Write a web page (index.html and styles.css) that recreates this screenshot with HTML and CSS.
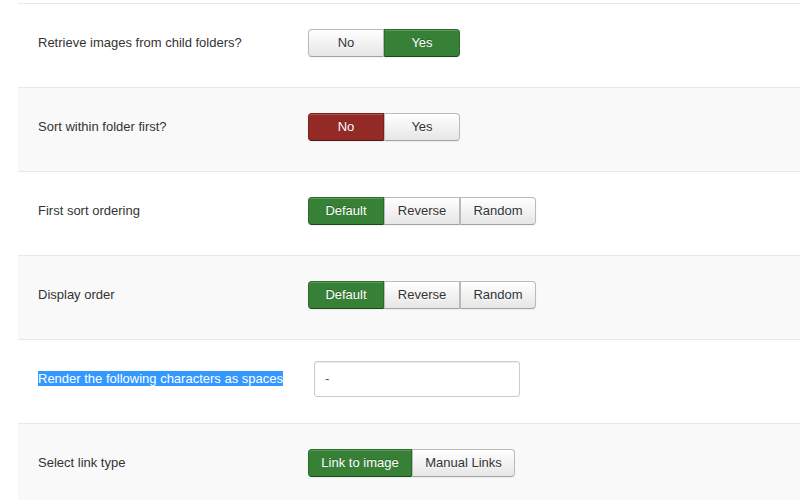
FILE: index.html
```html
<!DOCTYPE html>
<html>
<head>
<meta charset="utf-8">
<link rel="stylesheet" href="styles.css">
</head>
<body>
<div class="form">
  <div class="row">
    <div class="label">Retrieve images from child folders?</div>
    <div class="controls">
      <div class="btn-group">
        <span class="btn">No</span>
        <span class="btn btn-success">Yes</span>
      </div>
    </div>
  </div>
  <div class="row alt">
    <div class="label">Sort within folder first?</div>
    <div class="controls">
      <div class="btn-group">
        <span class="btn btn-danger">No</span>
        <span class="btn">Yes</span>
      </div>
    </div>
  </div>
  <div class="row">
    <div class="label">First sort ordering</div>
    <div class="controls">
      <div class="btn-group">
        <span class="btn btn-success">Default</span>
        <span class="btn">Reverse</span>
        <span class="btn">Random</span>
      </div>
    </div>
  </div>
  <div class="row alt">
    <div class="label">Display order</div>
    <div class="controls">
      <div class="btn-group">
        <span class="btn btn-success">Default</span>
        <span class="btn">Reverse</span>
        <span class="btn">Random</span>
      </div>
    </div>
  </div>
  <div class="row">
    <div class="label"><span class="selected">Render the following characters as spaces</span></div>
    <div class="controls input-controls">
      <div class="input">-</div>
    </div>
  </div>
  <div class="row alt">
    <div class="label">Select link type</div>
    <div class="controls">
      <div class="btn-group">
        <span class="btn btn-success wide">Link to image</span>
        <span class="btn wide">Manual Links</span>
      </div>
    </div>
  </div>
</div>
</body>
</html>
```
FILE: styles.css
```css
html, body {
  margin: 0;
  padding: 0;
  background: #fff;
}
body {
  font-family: "Liberation Sans", Arial, sans-serif;
  font-size: 13px;
  line-height: 18px;
  color: #333;
  padding-top: 3px;
}
.form {
  margin-left: 18px;
  border-top: 1px solid #e8e8e8;
}
.row {
  display: flex;
  align-items: center;
  height: 77px;
  padding-bottom: 6px;
  border-bottom: 1px solid #e8e8e8;
  background: #fff;
}
.row.alt {
  background: #f9f9f9;
}
.label {
  width: 270px;
  padding-left: 20px;
  flex: none;
}
.selected {
  background: #3399ff;
  color: #fff;
}
.controls {
  display: flex;
}
.btn-group {
  display: flex;
}
.btn {
  box-sizing: border-box;
  width: 76px;
  height: 28px;
  padding: 4px 0;
  text-align: center;
  color: #333;
  text-shadow: 0 1px 1px rgba(255,255,255,0.75);
  background: linear-gradient(#ffffff, #e6e6e6);
  border: 1px solid #bbb;
  border-bottom-color: #a2a2a2;
  box-shadow: inset 0 1px 0 rgba(255,255,255,0.2), 0 1px 2px rgba(0,0,0,0.05);
}
.btn:first-child {
  border-radius: 4px 0 0 4px;
}
.btn:last-child {
  border-radius: 0 4px 4px 0;
}
.btn-success {
  color: #fff;
  text-shadow: 0 -1px 0 rgba(0,0,0,0.25);
  background: #378137;
  border-color: #2d6b2d #2d6b2d #1d451d;
}
.btn-danger {
  color: #fff;
  text-shadow: 0 -1px 0 rgba(0,0,0,0.25);
  background: #942a25;
  border-color: #7a231f #7a231f #4f1714;
}
.btn.wide:first-child {
  width: 104px;
}
.btn.wide:last-child {
  width: 103px;
}
.input-controls {
  padding-left: 6px;
}
.input {
  box-sizing: border-box;
  width: 206px;
  height: 36px;
  padding: 8px 10px;
  border: 1px solid #ccc;
  border-radius: 3px;
  background: #fff;
  color: #555;
  box-shadow: inset 0 1px 1px rgba(0,0,0,0.075);
}
```
